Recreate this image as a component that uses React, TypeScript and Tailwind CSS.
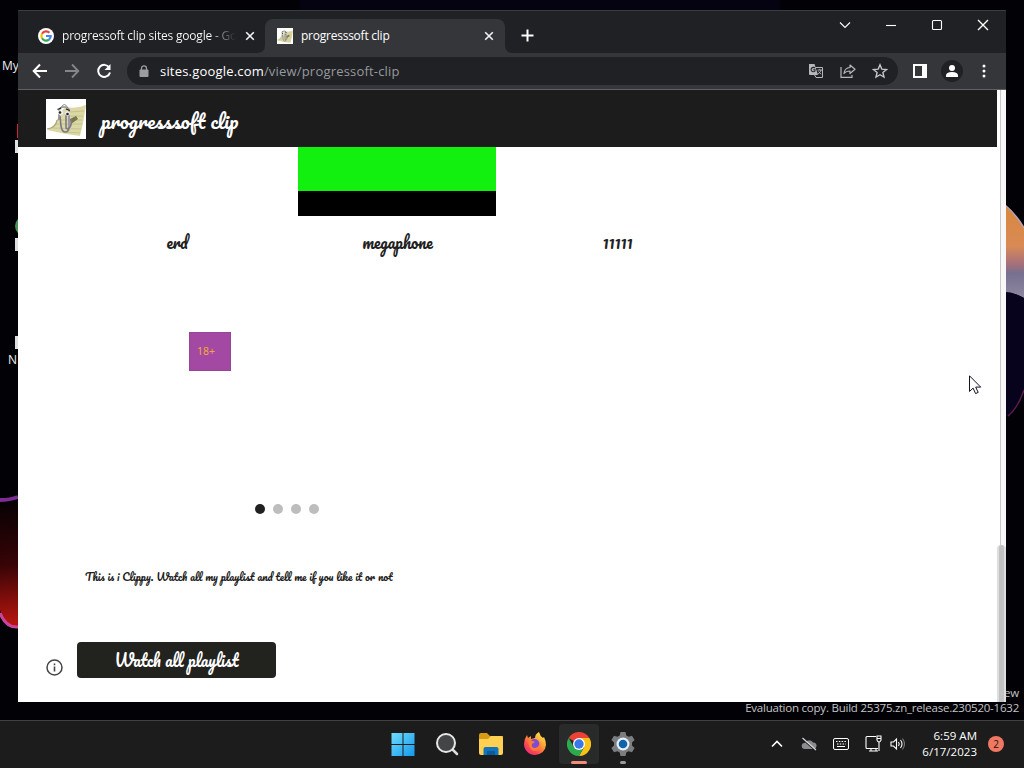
import type { ReactNode } from 'react';
import clsx from 'clsx';

const UI_FONT = 'font-["Open_Sans","Noto_Sans",sans-serif]';
const SCRIPT_FONT = 'font-["Pacifico","Lato",sans-serif] font-normal';

function Wallpaper() {
  return (
    <svg className="absolute inset-0" width="1024" height="720" viewBox="0 0 1024 720" fill="none">
      <defs>
        <linearGradient id="petal" x1="0" y1="205" x2="0" y2="296" gradientUnits="userSpaceOnUse">
          <stop offset="0" stopColor="#d8883c" />
          <stop offset="0.45" stopColor="#d98a55" />
          <stop offset="0.65" stopColor="#a5707c" />
          <stop offset="0.75" stopColor="#77708f" />
          <stop offset="1" stopColor="#8d86a0" />
        </linearGradient>
        <linearGradient id="ember" x1="0" y1="500" x2="14" y2="630" gradientUnits="userSpaceOnUse">
          <stop offset="0" stopColor="#050104" />
          <stop offset="0.5" stopColor="#380406" />
          <stop offset="1" stopColor="#c41710" />
        </linearGradient>
      </defs>
      <rect width="1024" height="720" fill="#020106" />
      <path d="M300 0H780V10H300z" fill="#050312" />
      <path d="M1004 204Q1016 214 1024 228V298Q1014 292 1004 292Z" fill="url(#petal)" />
      <path d="M1004 204Q1016 214 1024 228" stroke="#b9a3b5" strokeWidth="1.5" />
      <path d="M1004 292Q1014 292 1024 298V390Q1018 412 1004 418Z" fill="#08031c" />
      <path d="M1024 390Q1018 408 1008 416" stroke="#5a1d4d" strokeWidth="1.5" />
      <path d="M0 502H18V628Q6 628 0 610Z" fill="url(#ember)" />
      <path d="M0 500Q10 500 18 497" stroke="#7c2c92" strokeWidth="4" />
      <path d="M0 613Q6 628 18 627" stroke="#c9449c" strokeWidth="3" />
      <path d="M17 124h2v14h-2z" fill="#d51f45" />
      <circle cx="25" cy="226" r="10" fill="#4a9157" />
      <path d="M15 140h4v13h-4zM15 238h4v13h-4zM15 336h4v13h-4z" fill="#e0e0e0" />
    </svg>
  );
}

function GoogleIcon() {
  return (
    <svg width="16" height="16" viewBox="0 0 16 16" fill="none" className="shrink-0">
      <circle cx="8" cy="8" r="8" fill="#fff" />
      <g strokeWidth="2.2">
        <path d="M4 5.7A4.7 4.7 0 0 1 11.4 4.7" stroke="#ea4335" />
        <path d="M4 10.3A4.7 4.7 0 0 1 4 5.7" stroke="#fbbc05" />
        <path d="M11 11.6A4.7 4.7 0 0 1 4 10.3" stroke="#34a853" />
        <path d="M8 8h4.7A4.7 4.7 0 0 1 11 11.6" stroke="#4285f4" />
      </g>
    </svg>
  );
}

// Paperclip character leaning on a sheet of yellow paper
function ClippyLogo({ size }: { size: number }) {
  return (
    <svg width={size} height={size} viewBox="0 0 40 40" fill="none" className="shrink-0">
      <rect width="40" height="40" fill="#fff" />
      <path d="M20 8Q31 10 40 6Q38 22 34 37Q18 35 1 31Q12 25 13 14Z" fill="#dbd8a6" />
      <path d="M23 13l15-1M23 17l14 0M11 21l25 0M9 25l27 0M6 29l29 1M18 33l16 1" stroke="#c0bd86" strokeWidth=".8" />
      <path d="M24 20l6-3 2 3-7 5z" fill="#77784b" />
      <path d="M1 30Q10 29 11 21" stroke="#a9a57d" strokeWidth="1.2" />
      <path
        d="M13 21V13Q13 8 18 8Q23 8 23 13V28Q23 33 19 33Q16 33 15 27L14 17M20 14V28Q20 31 23 29Q26 27 25 20"
        stroke="#7d7886"
        strokeWidth="1.6"
      />
      <path d="M13 22V13Q13 8 18 8Q23 8 23 13V28" stroke="#c6c1cc" strokeWidth=".6" />
      <path d="M15 9Q18 2 22 9" stroke="#8c8996" />
      <ellipse cx="14.500" cy="13.500" rx="2.700" ry="2.300" fill="#f2f2f2" />
      <ellipse cx="21.500" cy="14.500" rx="2.500" ry="2.300" fill="#f2f2f2" />
      <circle cx="14" cy="13.500" r="1.300" fill="#222" />
      <circle cx="21.500" cy="15" r="1.300" fill="#222" />
      <path d="M11.500 10.500l3.500-1.500M20 10l4 1.500" stroke="#222" strokeWidth="1.300" />
    </svg>
  );
}

function TabClose() {
  return (
    <svg width="10" height="10" viewBox="0 0 10 10" className="shrink-0" stroke="#f1f3f4" strokeWidth="1.6">
      <path d="M1.200 1.200l7.600 7.600M8.800 1.200l-7.600 7.600" />
    </svg>
  );
}

function CaptionButton({ children }: { children: ReactNode }) {
  return (
    <button className="flex h-7 w-[46px] items-center justify-center">
      <svg width="12" height="12" viewBox="0 0 12 12" fill="none" stroke="#fff" strokeWidth="1.1">
        {children}
      </svg>
    </button>
  );
}

function TabStrip() {
  return (
    <div className="flex h-[43px] shrink-0 border-t border-[#3b3c40] bg-[#202124]">
      <div className="mt-2 flex h-[34px] w-[247px] items-center pl-5">
        <GoogleIcon />
        <span className="ml-2 w-[174px] bg-linear-to-r from-white from-85% to-[#202124] bg-clip-text text-xs tracking-[-0.2px] whitespace-nowrap text-transparent">
          progressoft clip sites google - Go
        </span>
        <span className="ml-[9px]"><TabClose /></span>
      </div>
      <div className="relative mt-2 flex h-[34px] w-[240px] items-center rounded-t-lg bg-[#35363a] pl-3">
        {/* curved feet of the active tab */}
        <svg className="absolute bottom-0 -left-2" width="8" height="8"><path d="M8 0V8H0Q8 8 8 0Z" fill="#35363a" /></svg>
        <svg className="absolute -right-2 bottom-0" width="8" height="8"><path d="M0 0V8H8Q0 8 0 0Z" fill="#35363a" /></svg>
        <ClippyLogo size={16} />
        <span className="ml-2 w-[183px] text-xs tracking-[-0.24px] whitespace-nowrap text-white">progresssoft clip</span>
        <TabClose />
      </div>
      <svg className="mt-[18px] ml-4" width="13" height="13" viewBox="0 0 13 13" stroke="#fff" strokeWidth="2">
        <path d="M6.500 .5v12M.5 6.500h12" />
      </svg>
      <div className="ml-auto flex">
        <CaptionButton><path d="M1 3.500l5 5 5-5" /></CaptionButton>
        <CaptionButton><path d="M1 6.500h10" /></CaptionButton>
        <CaptionButton><rect x="1.500" y="1.500" width="9" height="9" rx="1" /></CaptionButton>
        <CaptionButton><path d="M1 1l10 10M11 1L1 11" strokeWidth="1.4" /></CaptionButton>
      </div>
    </div>
  );
}

function ToolButton({ children }: { children: ReactNode }) {
  return <button className="flex h-7 w-8 items-center justify-center">{children}</button>;
}

function Toolbar() {
  return (
    <div className="flex h-[37px] shrink-0 items-center border-b border-[#5f6063] bg-[#35363a] px-1.5">
      <ToolButton>
        <svg width="16" height="16" viewBox="0 0 16 16" fill="none" stroke="#fff" strokeWidth="2"><path d="M15 8H2M8 1.500L1.700 8 8 14.500" /></svg>
      </ToolButton>
      <ToolButton>
        <svg width="16" height="16" viewBox="0 0 16 16" fill="none" stroke="#85868a" strokeWidth="1.8"><path d="M1 8h13M8 1.500L14.300 8 8 14.500" /></svg>
      </ToolButton>
      <ToolButton>
        <svg width="16" height="16" viewBox="0 0 16 16" fill="none" stroke="#fff" strokeWidth="2"><path d="M13.200 4.500A6 6 0 1 0 14 9.500" /><path d="M14.500 1v6h-6z" fill="#fff" stroke="none" /></svg>
      </ToolButton>
      <div className="ml-[7px] flex h-7 flex-1 items-center rounded-full bg-[#202124] pr-0.5 pl-3">
        <svg width="10" height="13" viewBox="0 0 10 13" fill="none">
          <rect x=".5" y="4.500" width="9" height="7.500" rx="1" fill="#9b9da0" />
          <path d="M2.500 5V3.300a2.500 2.500 0 0 1 5 0V5" stroke="#9b9da0" strokeWidth="1.300" />
        </svg>
        <span className="mt-px ml-[11px] flex-1 text-[13px] tracking-[0.19px] whitespace-nowrap text-[#97999d]">
          <span className="text-white">sites.google.com</span>/view/progressoft-clip
        </span>
        <ToolButton>
          <svg width="14" height="14" viewBox="0 0 14 14" fill="none">
            <path d="M5 3.500h8.500v10H7L5 10z" stroke="#b6b7b9" />
            <path d="M0 0h5.500L9 11H1Q0 11 0 10z" fill="#b6b7b9" />
            <path d="M6 4.200A2.200 2.200 0 1 0 6 7V5.700H4.200" stroke="#202124" strokeWidth="1.100" />
            <path d="M8.500 6H13M10.700 5v1M12 6Q11.500 8.500 9 10M9.500 7.500l2.700 2.700" stroke="#b6b7b9" strokeWidth=".9" />
          </svg>
        </ToolButton>
        <ToolButton>
          <svg width="16" height="14" viewBox="0 0 16 14" fill="none" stroke="#b6b7b9" strokeWidth="1.200">
            <path d="M1 3v10.300h11V11" />
            <path d="M4 9.500Q4.500 4 10 3.500V1l5 4.300-5 4.200V7Q6 7 4 9.500Z" strokeLinejoin="round" />
          </svg>
        </ToolButton>
        <ToolButton>
          <svg width="16" height="16" viewBox="0 0 16 16" fill="none" stroke="#c4c5c7" strokeWidth="1.400"><path d="M8 1.800l1.800 4.300 4.700.4-3.600 3 1.100 4.600L8 11.700l-4 2.400 1.100-4.600-3.600-3 4.700-.4z" /></svg>
        </ToolButton>
      </div>
      <div className="ml-1.5 flex">
        <ToolButton>
          <svg width="14" height="14" viewBox="0 0 14 14"><path d="M0 0h14v14H0zM2 2v10h7V2z" fill="#fff" fillRule="evenodd" /></svg>
        </ToolButton>
        <ToolButton>
          <svg width="22" height="22" viewBox="0 0 22 22" fill="#fff">
            <circle cx="11" cy="11" r="11" fill="#202124" />
            <circle cx="11" cy="8" r="3" />
            <path d="M5 17v-1.500Q5 12 11 12T17 15.500V17z" />
          </svg>
        </ToolButton>
        <ToolButton>
          <svg width="4" height="14" viewBox="0 0 4 14" fill="#fff"><circle cx="2" cy="2" r="1.500" /><circle cx="2" cy="7" r="1.500" /><circle cx="2" cy="12" r="1.500" /></svg>
        </ToolButton>
      </div>
    </div>
  );
}

function SitePage() {
  return (
    <div className="flex w-[979px] flex-col">
      <header className="flex h-[57px] shrink-0 items-center bg-[#1c1c1c] pl-7">
        <ClippyLogo size={40} />
        <h1 className={clsx('ml-[15px] mt-1 text-[20px] leading-7 whitespace-nowrap text-white', SCRIPT_FONT)}>
          progresssoft clip
        </h1>
      </header>

      <main className="flex flex-1 flex-col text-[#212121]">
        <div className="ml-[280px] h-[69px] w-[198px] border-b-[25px] border-black bg-[#12f00f]" />
        <div className={clsx('mt-3 ml-[49px] grid h-7 w-[661px] grid-cols-3 text-center text-[16px] leading-7', SCRIPT_FONT)}>
          <span>erd</span>
          <span>megaphone</span>
          <span>11111</span>
        </div>
        <div className="mt-[76px] ml-[171px] flex h-[39px] w-[42px] items-center border border-[#964695] bg-[#a349a4] pl-[7px] font-['Noto_Sans',sans-serif] text-[10.5px] text-[#f4a63b]">
          18+
        </div>
        <div className="mt-[133px] ml-[237px] flex gap-2">
          <span className="size-2.5 rounded-full bg-[#212121]" />
          <span className="size-2.5 rounded-full bg-[#bdbdbd]" />
          <span className="size-2.5 rounded-full bg-[#bdbdbd]" />
          <span className="size-2.5 rounded-full bg-[#bdbdbd]" />
        </div>
        <p className={clsx('mt-[53px] ml-[67px] h-5 text-[10.67px] leading-5 whitespace-nowrap', SCRIPT_FONT)}>
          This is i Clippy. Watch all my playlist and tell me if you like it or not
        </p>
        <div className="mt-[55px] ml-7 flex h-9">
          <svg className="mt-[17px]" width="17" height="17" viewBox="0 0 17 17" fill="none" stroke="#444746">
            <circle cx="8.500" cy="8.500" r="7.500" strokeWidth="1.500" />
            <path d="M8.500 7.500v5M8.500 4.500v1.700" strokeWidth="1.600" />
          </svg>
          <button className={clsx('ml-3.5 w-[199px] rounded bg-[#22231f] text-[16px] whitespace-nowrap text-white', SCRIPT_FONT)}>
            Watch all playlist
          </button>
        </div>
      </main>
    </div>
  );
}

function BrowserWindow() {
  return (
    <div className="absolute top-2.5 left-[18px] flex h-[692px] w-[988px] flex-col bg-white">
      <TabStrip />
      <Toolbar />
      <div className="flex flex-1">
        <SitePage />
        <div className="flex w-[9px] flex-col items-end">
          <div className="h-[455px] w-1.5 border-l border-[#c9c9c9] bg-[#f8f8f8]" />
          <div className="w-[9px] flex-1 rounded-t-sm border-x-2 border-[#dedede] bg-[#c1c1c1]" />
        </div>
      </div>
    </div>
  );
}

function TaskIcon({ active, children }: { active?: boolean; children: ReactNode }) {
  return (
    <div className={clsx('flex h-10 w-10 items-center justify-center rounded', active && 'bg-[#292b2b]')}>{children}</div>
  );
}

function TaskbarApps() {
  return (
    <div className="mb-0.5 ml-[383px] flex items-center gap-1">
      <TaskIcon>
        <svg width="24" height="24" viewBox="0 0 24 24">
          <defs>
            <linearGradient id="win" x1="0" y1="0" x2="1" y2="1"><stop stopColor="#70dcfa" /><stop offset="1" stopColor="#1299ee" /></linearGradient>
          </defs>
          <path d="M.5 1h11v11H.5zM12.500 1h11v11h-11zM.5 13h11v11H.5zM12.500 13h11v11h-11z" fill="url(#win)" />
        </svg>
      </TaskIcon>
      <TaskIcon>
        <svg width="24" height="24" viewBox="0 0 24 24" fill="none">
          <path d="M17 17l5 5" stroke="#ddd" strokeWidth="2.500" strokeLinecap="round" />
          <circle cx="11" cy="11" r="9" fill="#444546" stroke="#e7e7e7" strokeWidth="2" />
        </svg>
      </TaskIcon>
      <TaskIcon>
        <svg width="26" height="24" viewBox="0 0 26 24">
          <path d="M1 3q0-2 2-2h6l3 3h13v5H1z" fill="#d69b13" />
          <path d="M1 7h9l3-3h10q2 0 2 2v15q0 2-2 2H3q-2 0-2-2z" fill="#ffd052" />
          <path d="M5.500 23v-6q0-2 2-2h11q2 0 2 2v6z" fill="#1373bd" />
          <path d="M9 23v-4h8v4" fill="#0b5a99" />
        </svg>
      </TaskIcon>
      <TaskIcon>
        <svg width="24" height="24" viewBox="0 0 24 24" fill="none">
          <defs>
            <linearGradient id="fox" x1="20" y1="2" x2="4" y2="22" gradientUnits="userSpaceOnUse">
              <stop stopColor="#ffe84b" /><stop offset=".4" stopColor="#ff9634" /><stop offset=".75" stopColor="#ff4152" /><stop offset="1" stopColor="#e82d8c" />
            </linearGradient>
          </defs>
          <path d="M12 23A11 11 0 0 1 1 12Q1 7 4 3L5 6 8 4v3l4-1Q12 2 16 0q1 4 4 6l1-1q2 4 2 8-1 9-11 10Z" fill="url(#fox)" />
          <circle cx="11.500" cy="12" r="5" fill="#804bd4" />
          <path d="M5 8q4 0 7 2l-3 2q-1 4 3 4 5-1 4-6 3 9-5 9-6-2-6-11Z" fill="#ff7a36" />
        </svg>
      </TaskIcon>
      <div className="relative">
        <TaskIcon active>
          <svg width="24" height="24" viewBox="0 0 24 24">
            <path d="M12 12L1.600 6A12 12 0 0 1 22.400 6H12z" fill="#ea4335" />
            <path d="M12 6h10.400A12 12 0 0 1 12 24l5.200-9z" fill="#fbc116" />
            <path d="M12 24A12 12 0 0 1 1.600 6l5.200 9L12 18l5.200-3z" fill="#2da94f" />
            <circle cx="12" cy="12" r="6" fill="#fff" />
            <circle cx="12" cy="12" r="4.700" fill="#3978e8" />
          </svg>
        </TaskIcon>
        <span className="absolute bottom-0 left-3 h-[3px] w-4 rounded-full bg-[#f08c78]" />
      </div>
      <div className="relative">
        <TaskIcon>
          <svg width="24" height="24" viewBox="0 0 24 24">
            <path d="M9.500 0h5l.8 3.400 2.300 1.300 3.400-1 2.600 4.400L21 10.500v3l2.600 2.400-2.600 4.400-3.400-1-2.300 1.300-.8 3.400h-5l-.8-3.400-2.300-1.300-3.400 1L.4 15.900 3 13.500v-3L.4 8.100 3 3.700l3.400 1 2.300-1.300z" fill="#7b7d80" />
            <circle cx="12" cy="12" r="6.500" fill="#e7f1f8" />
            <circle cx="12" cy="12" r="4.300" fill="#1263a9" />
          </svg>
        </TaskIcon>
        <span className="absolute bottom-0 left-[17px] h-[3px] w-1.5 rounded-full bg-[#9b9b9b]" />
      </div>
    </div>
  );
}

function Tray() {
  return (
    <div className="mb-0.5 ml-auto flex items-center pr-5">
      <svg width="12" height="8" viewBox="0 0 12 8" fill="none" stroke="#fff" strokeWidth="1.600"><path d="M1 6.500l5-5 5 5" /></svg>
      <svg className="ml-[18px]" width="16" height="14" viewBox="0 0 16 14" fill="none">
        <path d="M4 12a3 3 0 0 1-.5-6A5 5 0 0 1 12 5.500 3.300 3.300 0 0 1 13 12z" fill="#8a8c8e" />
        <path d="M1 1.800l14 12" stroke="#1c1c1c" strokeWidth="1.500" /><path d="M1.500 1L15 13" stroke="#ddd" strokeWidth="1.200" />
      </svg>
      <svg className="ml-4" width="16" height="12" viewBox="0 0 16 12" fill="none" stroke="#fff">
        <rect x=".5" y=".5" width="15" height="11" rx="1.500" />
        <path d="M3 3.500h10M4 6h9" strokeDasharray="1.500 1.300" /><path d="M4 8.500h8" />
      </svg>
      <svg className="ml-4" width="17" height="17" viewBox="0 0 17 17" fill="none" stroke="#fff" strokeWidth="1.100">
        <path d="M11 1.500H2q-1 0-1 1v10q0 1 1 1h11M4 16h9M6 13.500V16M11 13.500V16M14 7v9" />
        <path d="M12 1h4v4q0 1.500-2 2-2-.5-2-2zM12 3.500h4" />
      </svg>
      <svg className="ml-2" width="15" height="14" viewBox="0 0 15 14" fill="none" stroke="#fff" strokeWidth="1.100">
        <path d="M1 5h2.500l3-3v10l-3-3H1zM8.500 5q1.500 2 0 4M10.500 3q3 4 0 8" /><path d="M12.500 1.500q4 5.500 0 11" stroke="#777" />
      </svg>
      <div className="ml-3 w-[60px] text-right text-[11.5px] leading-4 tracking-[0.02px] whitespace-nowrap text-white">
        <div>6:59 AM</div>
        <div>6/17/2023</div>
      </div>
      <div className="ml-[11px] flex size-4 items-center justify-center rounded-full bg-[#ef7862] text-[10px] leading-none text-[#25110e]">2</div>
    </div>
  );
}

export default function App() {
  return (
    <div className={clsx('relative flex h-[768px] w-[1024px] flex-col overflow-hidden bg-black', UI_FONT)}>
      <div className="relative h-[720px] shrink-0">
        <Wallpaper />
        <span className="absolute top-[58px] left-0.5 text-xs leading-4 text-[#eee]">My</span>
        <span className="absolute top-[352px] left-2 text-xs leading-4 text-[#eee]">N</span>
        <div className="absolute top-[685px] right-[5px] text-right text-[11.5px] leading-[15px] tracking-[-0.22px] whitespace-nowrap text-[#c4c4c4]">
          <div>ew</div>
          <div>Evaluation copy. Build 25375.zn_release.230520-1632</div>
        </div>
        <BrowserWindow />
        <svg className="absolute top-[375px] left-[969px]" width="13" height="20" viewBox="0 0 13 20">
          <path d="M.5 .8v15.700l3.600-3.400 2.500 5.500 2.600-1.200-2.500-5.300h5z" fill="#fff" stroke="#111320" />
        </svg>
      </div>
      <footer className="flex h-12 shrink-0 items-center border-t border-[#414142] bg-[#1c1c1c]">
        <TaskbarApps />
        <Tray />
      </footer>
    </div>
  );
}
